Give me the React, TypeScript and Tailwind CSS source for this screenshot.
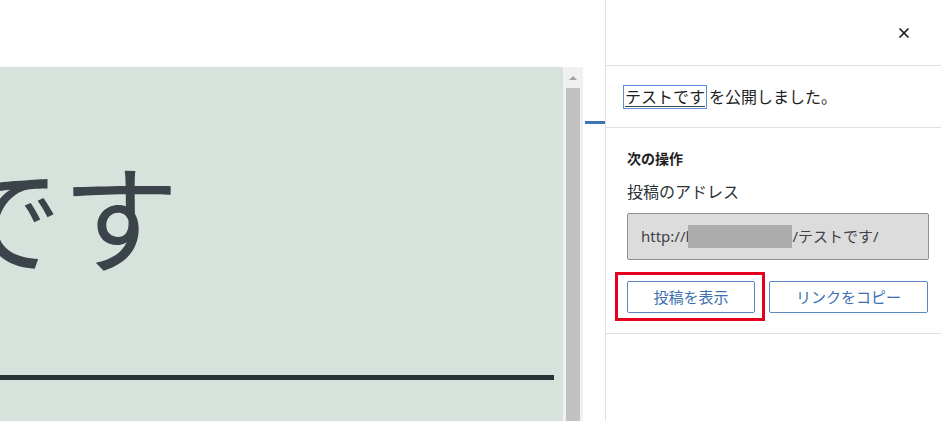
import { X } from "lucide-react";

const FONT = "font-['Noto_Sans','Noto_Sans_CJK_JP',sans-serif]";

function Scrollbar() {
  return (
    <div className="w-[20px] bg-[#f0f0f0] flex flex-col items-center">
      <div className="h-[21px] flex items-center justify-center">
        <div className="w-0 h-0 border-x-[4px] border-x-transparent border-b-[4px] border-b-[#a3a3a3]" />
      </div>
      <div className="w-[14px] flex-1 bg-[#c1c1c1]" />
    </div>
  );
}

function Sidebar() {
  return (
    <div className="w-[346px] h-full border-l border-[#e0e0e0] bg-white flex flex-col">
      <div className="w-[335px] h-[66px] border-b border-[#e0e0e0] flex items-center justify-end pr-[29px]">
        <X size={16} strokeWidth={2.6} className="text-[#1e1e1e]" />
      </div>

      <div className="w-[335px] h-[62px] border-b border-[#e0e0e0] flex items-center pl-[18px] pt-[1px] text-[16px] text-[#1e1e1e]">
        <span className="underline underline-offset-[3px] decoration-[#3c434a] outline outline-1 outline-[#5b8fd6] px-[1px] leading-[22px]">
          テストです
        </span>
        <span className="ml-[3px]">を公開しました。</span>
      </div>

      <div className="w-[335px] border-b border-[#e0e0e0] pl-[21px] pr-[11px] pt-[21px] pb-[20px]">
        <div className="text-[14px] font-bold text-[#1e1e1e] leading-[20px]">次の操作</div>
        <div className="mt-[11px] text-[16px] text-[#2c3338] leading-[24px]">投稿のアドレス</div>
        <div className="mt-[9px] w-[302px] h-[47px] bg-[#dcdcdc] border border-[#8c8f94] rounded-[2px] flex items-center pl-[13px] text-[15px] text-[#3c434a]">
          <span>http://l</span>
          <span className="w-[104px] h-[23px] bg-[#acacac] -ml-[1px]" />
          <span>/テストです/</span>
        </div>
        <div className="mt-[21px] flex gap-[14px]">
          <div className="relative">
            <button className="w-[128px] h-[32px] border border-[#5a86c4] rounded-[2px] text-[15px] text-[#3a6fb0] bg-white">
              投稿を表示
            </button>
            <div className="absolute -left-[12px] -top-[9px] w-[150px] h-[49px] border-[3px] border-[#e6001e] pointer-events-none" />
          </div>
          <button className="w-[159px] h-[32px] border border-[#5a86c4] rounded-[2px] text-[15px] text-[#3a6fb0] bg-white">
            リンクをコピー
          </button>
        </div>
      </div>
    </div>
  );
}

export default function App() {
  return (
    <div className={`w-[951px] h-[421px] flex bg-white overflow-hidden ${FONT}`}>
      <div className="w-[605px] flex flex-col">
        <div className="h-[67px] bg-white" />
        <div className="flex-1 flex">
          <div className="w-[563px] bg-[#d6e3dc] overflow-hidden pt-[93px]">
            <div className="whitespace-nowrap -ml-[55px] text-[117px] leading-none text-[#3c434a]">
              です
            </div>
            <div className="mt-[98px] w-[554px] h-[5px] bg-[#2c3338]" />
          </div>
          <Scrollbar />
          <div className="w-[22px] bg-white pt-[54px] pl-[2px]">
            <div className="h-[3px] bg-[#3e73b5]" />
          </div>
        </div>
      </div>
      <Sidebar />
    </div>
  );
}
